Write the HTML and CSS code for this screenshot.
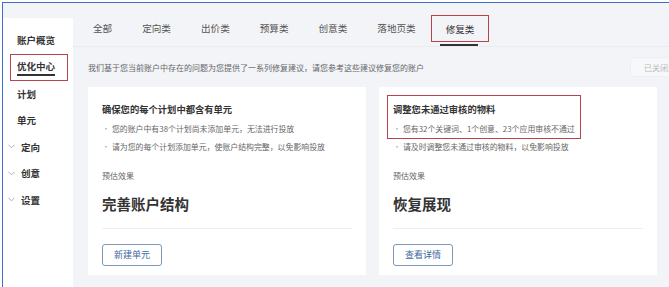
FILE: index.html
```html
<!DOCTYPE html>
<html lang="zh-CN">
  <head>
    <meta charset="UTF-8" />
    <title>优化中心</title>
    <link rel="stylesheet" href="styles.css">
  </head>
  <body>
    <div class="frame">
      <!-- Left navigation -->
      <ul class="side-nav">
        <li class="nav-item">账户概览</li>
        <li class="nav-item nav-active"><span>优化中心</span></li>
        <li class="nav-item">计划</li>
        <li class="nav-item">单元</li>
        <li class="nav-item nav-group">
          <svg class="chevron" viewBox="0 0 8 5"><polyline points="0.5,0.5 4,4 7.5,0.5" /></svg>定向
        </li>
        <li class="nav-item nav-group">
          <svg class="chevron" viewBox="0 0 8 5"><polyline points="0.5,0.5 4,4 7.5,0.5" /></svg>创意
        </li>
        <li class="nav-item nav-group">
          <svg class="chevron" viewBox="0 0 8 5"><polyline points="0.5,0.5 4,4 7.5,0.5" /></svg>设置
        </li>
      </ul>

      <div class="main">
        <!-- Category tabs -->
        <div class="tabs">
          <div class="tab">全部</div>
          <div class="tab">定向类</div>
          <div class="tab">出价类</div>
          <div class="tab">预算类</div>
          <div class="tab">创意类</div>
          <div class="tab">落地页类</div>
          <div class="tab tab-active">修复类</div>
        </div>

        <div class="content">
          <div class="desc-row">
            <p class="desc">我们基于您当前账户中存在的问题为您提供了一系列修复建议，请您参考这些建议修复您的账户</p>
            <button class="closed-button">已关闭建议</button>
          </div>

          <!-- Suggestion cards -->
          <div class="cards">
            <div class="card">
              <div class="card-head">
                <h3 class="card-title">确保您的每个计划中都含有单元</h3>
                <p class="card-point">您的账户中有38个计划尚未添加单元，无法进行投放</p>
              </div>
              <p class="card-point">请为您的每个计划添加单元，使账户结构完整，以免影响投放</p>
              <p class="effect-label">预估效果</p>
              <p class="effect">完善账户结构</p>
              <div class="card-foot">
                <button class="card-button">新建单元</button>
              </div>
            </div>

            <div class="card">
              <div class="card-head card-marked">
                <h3 class="card-title">调整您未通过审核的物料</h3>
                <p class="card-point">您有32个关键词、1个创意、23个应用审核不通过</p>
              </div>
              <p class="card-point">请及时调整您未通过审核的物料，以免影响投放</p>
              <p class="effect-label">预估效果</p>
              <p class="effect">恢复展现</p>
              <div class="card-foot">
                <button class="card-button">查看详情</button>
              </div>
            </div>
          </div>
        </div>
      </div>
    </div>
  </body>
</html>
```

FILE: styles.css
```css
/* basic styling */
* {
  margin: 0;
  padding: 0;
  box-sizing: border-box;
}
body {
  padding: 2px 0 0 2px;
  height: 287px;
  overflow: hidden;
  background: #ffffff;
  font-family: "Noto Sans CJK SC", "Noto Sans", sans-serif;
  color: #333333;
}

/* outer frame with the blue edge */
.frame {
  display: flex;
  height: 285px;
  border-top: 1px solid #3b6fce;
  border-left: 1px solid #3b6fce;
  background: #f3f4f8;
}

/* Left navigation */
.side-nav {
  flex: none;
  width: 70px;
  margin-top: 15px;
  padding-top: 9px;
  list-style: none;
  background: #ffffff;
}
.nav-item {
  display: flex;
  align-items: center;
  height: 26.5px;
  padding-left: 14px;
  font-size: 9.5px;
  font-weight: bold;
  color: #333333;
}
.nav-active {
  margin: 0 5px 0 7px;
  padding-left: 6px;
  border: 1px solid #b8434b;
  height: 27px;
}
.nav-active span {
  padding-bottom: 1px;
  border-bottom: 2px solid #333333;
}
.nav-group {
  padding-left: 5px;
}
.chevron {
  width: 7px;
  height: 5px;
  margin-right: 6px;
  fill: none;
  stroke: #999999;
  stroke-width: 0.9;
}

/* Main area */
.main {
  flex: 1;
  min-width: 0;
  overflow: hidden;
}
.tabs {
  display: flex;
  height: 44px;
  padding: 12px 0 0 5px;
  border-bottom: 1px solid #eaebef;
}
.tab {
  height: 27px;
  padding: 0 15px;
  line-height: 27px;
  font-size: 9.6px;
  color: #555555;
}
.tab-active {
  position: relative;
  border: 1px solid #b8434b;
  padding: 0 14px;
  color: #333333;
}
.tab-active::after {
  content: "";
  position: absolute;
  left: 8px;
  right: 10px;
  bottom: -5px;
  height: 2px;
  background: #333333;
}

.content {
  padding: 10px 13px 0 15px;
}
.desc-row {
  display: flex;
  align-items: center;
  justify-content: space-between;
  margin-right: -40px;
}
.desc {
  font-size: 8px;
  color: #666666;
}
.closed-button {
  width: 66px;
  height: 20px;
  padding-left: 13px;
  text-align: left;
  font-family: inherit;
  font-size: 8px;
  color: #b8b8b8;
  background: #f7f8fa;
  border: 1px solid #eeeff2;
  border-radius: 2px;
}

/* Cards */
.cards {
  display: grid;
  grid-template-columns: 278px 278px;
  gap: 13px;
  margin-top: 10px;
}
.card {
  height: 188px;
  padding: 15px 14px 14px;
  background: #ffffff;
}
.card-marked {
  width: fit-content;
  margin: -7px 0 -1px -6px;
  padding: 6px 5px 0 5px;
  border: 1px solid #b8434b;
}
.card-title {
  font-size: 9.3px;
  line-height: 14px;
  font-weight: bold;
  color: #333333;
}
.card-point {
  margin-top: 4px;
  font-size: 7.9px;
  line-height: 18px;
  color: #666666;
}
.card-point + .card-point,
.card-head + .card-point {
  margin-top: 0;
}
.card-point::before {
  content: "•";
  margin-right: 2px;
  color: #aaaaaa;
}
.effect-label {
  margin-top: 13px;
  font-size: 8px;
  line-height: 14px;
  color: #666666;
}
.effect {
  margin-top: 11px;
  font-size: 14.5px;
  line-height: 20px;
  font-weight: bold;
  color: #333333;
}
.card-foot {
  margin-top: 14px;
  padding-top: 10px;
  border-top: 1px solid #eeeff2;
}
.card-button {
  width: 60px;
  height: 22px;
  font-family: inherit;
  font-size: 9px;
  color: #3c69a0;
  background: #ffffff;
  border: 1px solid #7d98b8;
  border-radius: 3px;
}
```
